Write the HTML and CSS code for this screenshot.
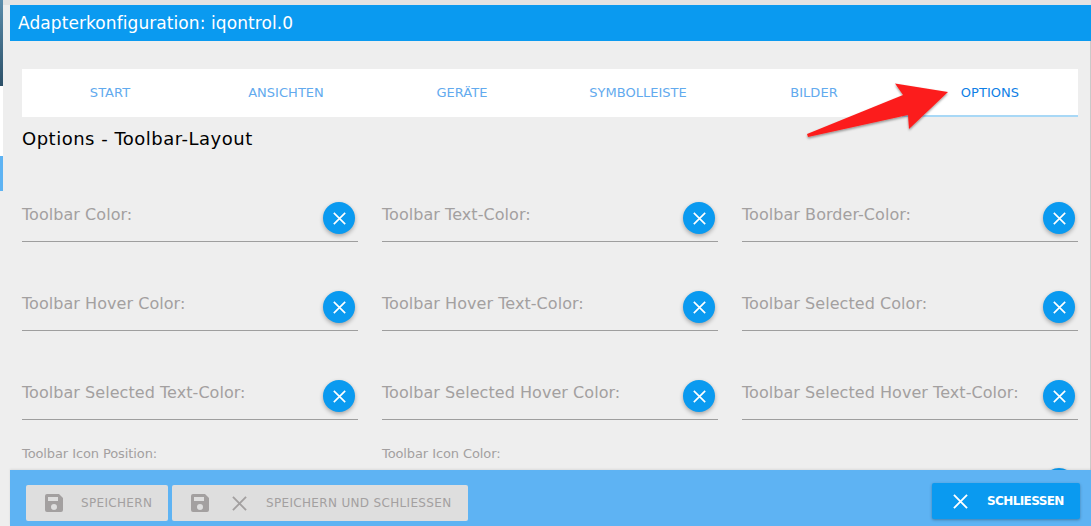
FILE: index.html

```html
<!DOCTYPE html>
<html lang="de">
<head>
    <meta charset="UTF-8">
    <meta name="viewport" content="width=device-width, initial-scale=1.0">
    <title>Adapterkonfiguration: iqontrol.0</title>
    <link rel="stylesheet" href="styles.css">
</head>
<body>
    <svg width="0" height="0" class="defs">
        <symbol id="icon-save" viewBox="0 0 18 18">
            <path d="M2 0h12l4 4v12a2 2 0 0 1-2 2H2a2 2 0 0 1-2-2V2a2 2 0 0 1 2-2zm1 3v4h10V3H3zm6 7a3 3 0 1 0 0 6 3 3 0 0 0 0-6z" fill-rule="evenodd"/>
        </symbol>
        <symbol id="icon-close" viewBox="0 0 16 16">
            <path d="M1 1l14 14M15 1L1 15" fill="none" stroke="currentColor" stroke-width="2"/>
        </symbol>
    </svg>

    <!-- Streifen der Seite hinter dem Dialog -->
    <div class="backdrop">
        <div class="backdrop-dark"></div>
        <div class="backdrop-white"></div>
        <div class="backdrop-blue"></div>
    </div>

    <div class="dialog">
        <div class="title">Adapterkonfiguration: iqontrol.0</div>

        <div class="content">
            <div class="tabs">
                <a class="tab">START</a>
                <a class="tab">ANSICHTEN</a>
                <a class="tab">GERÄTE</a>
                <a class="tab">SYMBOLLEISTE</a>
                <a class="tab">BILDER</a>
                <a class="tab active">OPTIONS</a>
            </div>

            <h2 class="section">Options - Toolbar-Layout</h2>

            <div class="fields">
                <div class="field"><span class="label">Toolbar Color:</span><button class="clear"><svg class="clear-x"><use href="#icon-close"/></svg></button></div>
                <div class="field"><span class="label">Toolbar Text-Color:</span><button class="clear"><svg class="clear-x"><use href="#icon-close"/></svg></button></div>
                <div class="field"><span class="label">Toolbar Border-Color:</span><button class="clear"><svg class="clear-x"><use href="#icon-close"/></svg></button></div>
                <div class="field"><span class="label">Toolbar Hover Color:</span><button class="clear"><svg class="clear-x"><use href="#icon-close"/></svg></button></div>
                <div class="field"><span class="label">Toolbar Hover Text-Color:</span><button class="clear"><svg class="clear-x"><use href="#icon-close"/></svg></button></div>
                <div class="field"><span class="label">Toolbar Selected Color:</span><button class="clear"><svg class="clear-x"><use href="#icon-close"/></svg></button></div>
                <div class="field"><span class="label">Toolbar Selected Text-Color:</span><button class="clear"><svg class="clear-x"><use href="#icon-close"/></svg></button></div>
                <div class="field"><span class="label">Toolbar Selected Hover Color:</span><button class="clear"><svg class="clear-x"><use href="#icon-close"/></svg></button></div>
                <div class="field"><span class="label">Toolbar Selected Hover Text-Color:</span><button class="clear"><svg class="clear-x"><use href="#icon-close"/></svg></button></div>
                <div class="field-small"><span class="label-small">Toolbar Icon Position:</span></div>
                <div class="field-small"><span class="label-small">Toolbar Icon Color:</span></div>
                <div class="field-small field-end"><button class="clear"></button></div>
            </div>
        </div>

        <div class="footer">
            <button class="btn btn-save">
                <svg class="icon-save"><use href="#icon-save"/></svg>
                <span class="btn-text">SPEICHERN</span>
            </button>
            <button class="btn btn-save-close">
                <svg class="icon-save"><use href="#icon-save"/></svg>
                <svg class="icon-close"><use href="#icon-close"/></svg>
                <span class="btn-text">SPEICHERN UND SCHLIESSEN</span>
            </button>
            <button class="btn btn-close">
                <svg class="icon-close"><use href="#icon-close"/></svg>
                <span class="btn-text">SCHLIESSEN</span>
            </button>
        </div>
    </div>

    <!-- roter Pfeil liegt über den Tabs -->
    <svg class="arrow" width="160" height="70" viewBox="800 75 160 70">
        <defs>
            <filter id="arrow-shadow" x="-10%" y="-10%" width="120%" height="130%">
                <feDropShadow dx="0" dy="1.5" stdDeviation="1.2" flood-color="#000" flood-opacity="0.4"/>
            </filter>
        </defs>
        <path d="M948 92L895 83.500L903 95L807 134L808 137L908 115L909 129Z" fill="#fc1f1c" filter="url(#arrow-shadow)"/>
    </svg>
</body>
</html>
```

FILE: styles.css

```css
html, body {
    height: 100%;
}
body {
    font-family: 'DejaVu Sans', Verdana, sans-serif;
    margin: 0;
    display: flex;
    overflow: hidden;
    background: #eee;
    color: #000;
}
.defs {
    position: absolute;
}
.backdrop {
    width: 3px;
    flex: none;
    background: #eee;
}
.backdrop-dark {
    height: 86px;
    background: linear-gradient(#5a8cab, #2c5068);
}
.backdrop-white {
    height: 70px;
    background: #fff;
}
.backdrop-blue {
    height: 35px;
    background: #5eb3f3;
}
.dialog {
    flex: 1;
    min-width: 0;
    display: flex;
    flex-direction: column;
    background: #eee;
    border-top: 5px solid #e3e3e3;
}
.title {
    height: 36px;
    line-height: 36px;
    margin-left: 7px;
    padding-left: 8px;
    flex: none;
    background: #0a9af0;
    color: #fff;
    font-size: 17px;
    letter-spacing: 0.08px;
}
.content {
    flex: 1;
    min-height: 0;
    overflow: hidden;
    padding: 28px 12px 0 19px;
    border-right: 1px solid #c9c9c9;
}
.tabs {
    display: grid;
    grid-template-columns: repeat(6, 1fr);
    height: 48px;
    background: #fff;
}
.tab {
    display: flex;
    align-items: center;
    justify-content: center;
    padding-bottom: 2px;
    box-sizing: border-box;
    font-size: 13px;
    letter-spacing: 0.03px;
    color: #62aaee;
}
.tab.active {
    color: #0f7fe6;
    border-bottom: 2px solid #a8d8f6;
    padding-bottom: 0;
}
.section {
    margin: 0;
    height: 44px;
    line-height: 44px;
    font-size: 18px;
    font-weight: normal;
    letter-spacing: 0.5px;
}
.fields {
    display: grid;
    grid-template-columns: repeat(3, 336px);
    column-gap: 24px;
    margin-top: -8px;
}
.field {
    height: 42px;
    margin-top: 47px;
    padding-top: 2px;
    box-sizing: border-box;
    display: flex;
    justify-content: space-between;
    border-bottom: 1px solid #9e9e9e;
}
.label {
    margin-top: 4px;
    font-size: 16px;
    letter-spacing: 0.05px;
    line-height: 18px;
    color: #a3a0a0;
    white-space: nowrap;
}
.clear {
    width: 32px;
    height: 32px;
    margin-right: 3px;
    padding: 0;
    border: 0;
    border-radius: 50%;
    flex: none;
    display: flex;
    align-items: center;
    justify-content: center;
    color: #fff;
    background: #0a9af0;
    box-shadow: 0 2px 4px rgba(0, 0, 0, 0.3);
}
.clear-x {
    width: 13px;
    height: 13px;
}
.field-small {
    margin-top: 25px;
    display: flex;
    justify-content: space-between;
}
.field-end {
    margin-top: 48px;
    justify-content: flex-end;
}
.label-small {
    font-size: 13px;
    letter-spacing: -0.1px;
    line-height: 18px;
    color: #a3a0a0;
}
.footer {
    height: 56px;
    margin-left: 7px;
    padding: 15px 11px 0 16px;
    box-sizing: border-box;
    flex: none;
    display: flex;
    align-items: flex-start;
    gap: 4px;
    background: #5eb3f3;
    box-shadow: 0 -1px 2px rgba(0, 0, 0, 0.08);
    position: relative;
}
.btn {
    height: 36px;
    padding: 0;
    border: 0;
    border-radius: 2px;
    display: flex;
    align-items: center;
    font-family: inherit;
    background: #dedede;
    color: #a3a0a0;
}
.btn-save {
    width: 142px;
    padding-left: 19px;
}
.btn-save-close {
    width: 296px;
    padding-left: 19px;
}
.btn-close {
    width: 148px;
    height: 36px;
    margin-left: auto;
    margin-top: -2px;
    padding-left: 21px;
    background: #0a9af0;
    color: #fff;
    box-shadow: 0 1px 3px rgba(0, 0, 0, 0.3);
}
.btn-text {
    font-size: 12px;
    letter-spacing: 0.33px;
    white-space: nowrap;
}
.icon-save {
    width: 18px;
    height: 18px;
    flex: none;
    fill: #a3a0a0;
    margin-right: 18px;
}
.icon-close {
    width: 15px;
    height: 15px;
    flex: none;
    margin-right: 19px;
}
.btn-save-close .icon-save {
    margin-right: 23px;
}
.btn-close .btn-text {
    font-weight: bold;
    letter-spacing: -0.6px;
}
.arrow {
    position: absolute;
    left: 800px;
    top: 75px;
}
```
